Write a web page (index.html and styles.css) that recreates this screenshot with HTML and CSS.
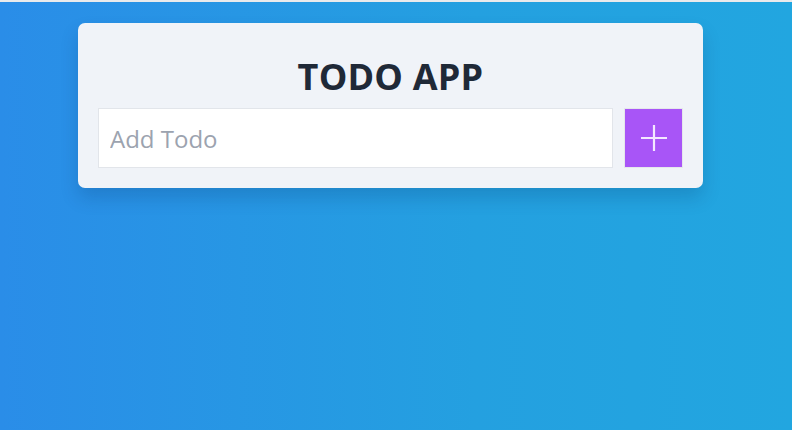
FILE: index.html
```html
<!DOCTYPE html>
<html lang="en">
<head>
<meta charset="utf-8">
<title>Todo App</title>
<link rel="stylesheet" href="styles.css">
</head>
<body>
<div class="topline"></div>
<main class="page">
  <section class="card">
    <h1 class="title">TODO APP</h1>
    <form class="add-form" onsubmit="return false">
      <input class="add-input" type="text" placeholder="Add Todo">
      <button class="add-btn" type="submit" aria-label="Add">
        <svg width="28" height="28" viewBox="0 0 28 28" aria-hidden="true">
          <path d="M14 1V27M1 14H27" stroke="#f3e8ff" stroke-width="2.2" fill="none"/>
        </svg>
      </button>
    </form>
  </section>
</main>
</body>
</html>
```
FILE: styles.css
```css
* { box-sizing: border-box; }
html, body { margin: 0; height: 100%; }
body {
  font-family: "Open Sans", "Noto Sans", sans-serif;
  background: linear-gradient(90deg, #2a8de8 0%, #24a0e0 60%, #22a6e0 100%);
  overflow: hidden;
}
.topline { height: 2px; background: #e9eaec; }
.page {
  padding: 21px 0 0 78px;
}
.card {
  width: 625px;
  background: #f0f3f8;
  border-radius: 7px;
  padding: 29px 20px 20px 20px;
  box-shadow: 0 10px 18px rgba(0, 40, 90, 0.18);
}
.title {
  margin: 0 0 7px 0;
  text-align: center;
  font-size: 36px;
  font-weight: 700;
  line-height: 49px;
  color: #1f2937;
  letter-spacing: 0.2px;
}
.add-form {
  display: flex;
  gap: 11px;
}
.add-input {
  flex: 1;
  height: 60px;
  border: 1px solid #e2e5ea;
  background: #fff;
  padding: 0 11px;
  font-family: inherit;
  font-size: 24px;
  color: #1f2937;
  outline: none;
  border-radius: 0;
}
.add-input::placeholder { color: #9ca3af; }
.add-btn {
  width: 59px;
  height: 60px;
  background: #a855f7;
  border: 1px solid #e5e7eb;
  display: flex;
  align-items: center;
  justify-content: center;
  padding: 0;
  cursor: pointer;
}
```
